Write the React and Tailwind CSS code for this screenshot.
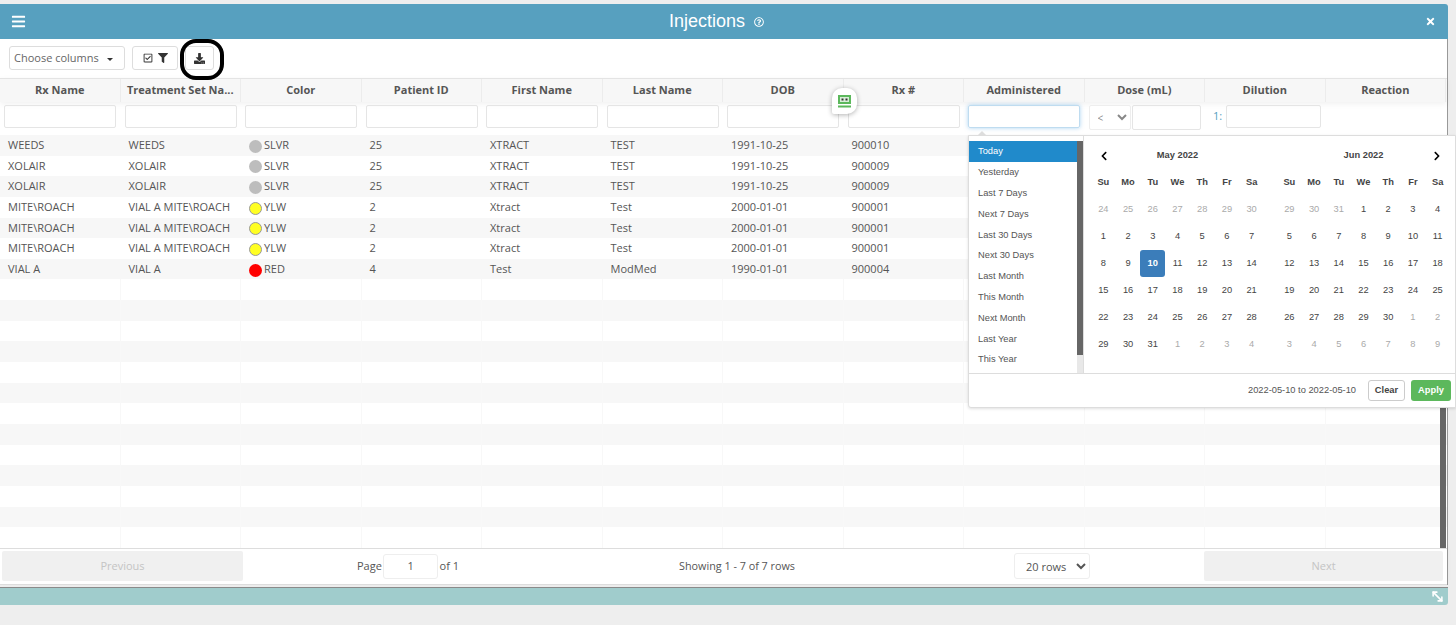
import { FaBars, FaTimes, FaFilter, FaRegCheckSquare, FaRegQuestionCircle, FaChevronLeft, FaChevronRight, FaDownload } from 'react-icons/fa'
import { MoveDiagonal2 } from 'lucide-react'

const columns = ['Rx Name', 'Treatment Set Na...', 'Color', 'Patient ID', 'First Name', 'Last Name', 'DOB', 'Rx #', 'Administered', 'Dose (mL)', 'Dilution', 'Reaction']

const rows = [
    ['WEEDS', 'WEEDS', 'SLVR', '25', 'XTRACT', 'TEST', '1991-10-25', '900010'],
    ['XOLAIR', 'XOLAIR', 'SLVR', '25', 'XTRACT', 'TEST', '1991-10-25', '900009'],
    ['XOLAIR', 'XOLAIR', 'SLVR', '25', 'XTRACT', 'TEST', '1991-10-25', '900009'],
    ['MITE\\ROACH', 'VIAL A MITE\\ROACH', 'YLW', '2', 'Xtract', 'Test', '2000-01-01', '900001'],
    ['MITE\\ROACH', 'VIAL A MITE\\ROACH', 'YLW', '2', 'Xtract', 'Test', '2000-01-01', '900001'],
    ['MITE\\ROACH', 'VIAL A MITE\\ROACH', 'YLW', '2', 'Xtract', 'Test', '2000-01-01', '900001'],
    ['VIAL A', 'VIAL A', 'RED', '4', 'Test', 'ModMed', '1990-01-01', '900004'],
]

const dotColors = { SLVR: 'bg-[#bdbdbd]', YLW: 'bg-[#ffff22] border border-[#999]', RED: 'bg-[#ff0000]' }

const ranges = ['Today', 'Yesterday', 'Last 7 Days', 'Next 7 Days', 'Last 30 Days', 'Next 30 Days', 'Last Month', 'This Month', 'Next Month', 'Last Year', 'This Year']

const dayNames = ['Su', 'Mo', 'Tu', 'We', 'Th', 'Fr', 'Sa']

const may = [
    [24, 25, 26, 27, 28, 29, 30],
    [1, 2, 3, 4, 5, 6, 7],
    [8, 9, 10, 11, 12, 13, 14],
    [15, 16, 17, 18, 19, 20, 21],
    [22, 23, 24, 25, 26, 27, 28],
    [29, 30, 31, 1, 2, 3, 4],
]

const jun = [
    [29, 30, 31, 1, 2, 3, 4],
    [5, 6, 7, 8, 9, 10, 11],
    [12, 13, 14, 15, 16, 17, 18],
    [19, 20, 21, 22, 23, 24, 25],
    [26, 27, 28, 29, 30, 1, 2],
    [3, 4, 5, 6, 7, 8, 9],
]

function Calendar({ title, weeks, isOff, selected, left, right }) {
    return (
        <div className="w-[173px]">
            <div className="h-[27px] flex items-center justify-between text-[9.3px] font-bold text-[#444]">
                <span className="w-[25px] flex justify-center text-[10px] text-black">{left && <FaChevronLeft />}</span>
                <span>{title}</span>
                <span className="w-[25px] flex justify-center text-[10px] text-black">{right && <FaChevronRight />}</span>
            </div>
            <div className="grid grid-cols-7 h-[27px] items-center text-center text-[9.3px] font-bold text-[#444]">
                {dayNames.map(d => <span key={d}>{d}</span>)}
            </div>
            {weeks.map((week, w) => (
                <div key={w} className="grid grid-cols-7 h-[27px] text-center text-[9.3px]">
                    {week.map((day, i) => (
                        <span
                            key={i}
                            className={`flex items-center justify-center rounded-[3px] ${selected && selected(w, i) ? 'bg-[#3b7dba] text-white font-bold' : isOff(w, day) ? 'text-[#aaa]' : 'text-[#444]'}`}
                        >
                            {day}
                        </span>
                    ))}
                </div>
            ))}
        </div>
    )
}

function DatePicker() {
    return (
        <div className="absolute left-[968px] top-[131px] w-[488px] z-20">
            <div className="absolute left-[9px] top-0 w-0 h-0 border-x-[5px] border-x-transparent border-b-[5px] border-b-[#ddd]"></div>
            <div className="mt-[4px] h-[273px] bg-white border border-[#ddd] rounded-bl-[3px] shadow-[0_1px_3px_rgba(0,0,0,0.12)] font-['Liberation_Sans',sans-serif]">
                <div className="flex h-[238px] border-b border-[#ddd]">
                    <div className="w-[115px] flex shrink-0 pt-[5px] border-r border-[#ddd]">
                        <div className="w-[108px]">
                            {ranges.map((r, i) => (
                                <div key={r} className={`h-[20.8px] pl-[9px] pt-[2px] flex items-center text-[9.3px] ${i === 0 ? 'bg-[#208acb] text-white' : 'text-[#555]'}`}>{r}</div>
                            ))}
                        </div>
                        <div className="w-[6px] bg-[#e8e8e8]">
                            <div className="h-[214px] bg-[#666]"></div>
                        </div>
                    </div>
                    <div className="flex pl-[7px] pt-[6px] gap-[13px]">
                        <Calendar title="May 2022" weeks={may} left isOff={(w, d) => (w === 0) || (w === 5 && d < 10)} selected={(w, i) => w === 2 && i === 2} />
                        <Calendar title="Jun 2022" weeks={jun} right isOff={(w, d) => (w === 0 && d > 20) || (w === 4 && d < 10) || w === 5} />
                    </div>
                </div>
                <div className="h-[33px] flex items-center justify-end pr-[4px] text-[9.3px] text-[#555]">
                    <span className="mr-[12px]">2022-05-10 to 2022-05-10</span>
                    <span className="h-[21px] w-[37px] mr-[6px] flex items-center justify-center border border-[#ccc] rounded-[3px] font-bold text-[#444]">Clear</span>
                    <span className="h-[21px] w-[40px] flex items-center justify-center bg-[#5cb85c] rounded-[3px] font-bold text-white">Apply</span>
                </div>
            </div>
        </div>
    )
}

export default function App() {
    const blankRows = Array.from({ length: 13 })

    return (
        <div className="relative h-[625px] w-[1456px] overflow-hidden bg-[#eeeeee] pt-[4px] font-['Open_Sans',sans-serif] text-[11px] text-[#555]">
            <div className="w-[1448px]">
                {/* Title bar */}
                <div className="h-[35px] bg-[#57a0bf] rounded-tr-[3px] flex items-center justify-between pl-[11px] pr-[12px] text-white">
                    <FaBars className="text-[15px]" />
                    <div className="flex items-center gap-[9px] mr-[18px] font-['Liberation_Sans',sans-serif] text-[18px] leading-none -mt-[2px]">
                        <span>Injections</span>
                        <FaRegQuestionCircle className="text-[10px] mt-[3px]" />
                    </div>
                    <FaTimes className="text-[11px]" />
                </div>

                <div className="bg-white border-r border-[#999]">
                    {/* Toolbar */}
                    <div className="h-[39px] flex items-center pl-[9px] pb-[1px]">
                        <div className="w-[116px] h-[24px] flex items-center pl-[4px] border border-[#ddd] rounded-[3px] text-[11px] text-[#666]">
                            Choose columns
                            <span className="ml-[8px] mt-[3px] w-0 h-0 border-x-[3px] border-x-transparent border-t-[3px] border-t-[#333]"></span>
                        </div>
                        <div className="w-[46px] h-[24px] ml-[7px] flex items-center justify-center gap-[5px] border border-[#ddd] rounded-[3px] text-[#333]">
                            <FaRegCheckSquare className="text-[10px]" />
                            <FaFilter className="text-[10px]" />
                        </div>
                        <div className="w-[29px] h-[24px] ml-[7px] flex items-center justify-center border border-[#ddd] rounded-[3px] text-[#333]">
                            <FaDownload className="text-[11px]" />
                        </div>
                    </div>

                    {/* Table */}
                    <div className="relative">
                        <div className="grid grid-cols-[repeat(12,120.5px)] h-[24px] bg-[#f7f7f7] border-t border-[#e4e4e4] shadow-[0_2px_6px_rgba(0,0,0,0.06)]">
                            {columns.map(c => (
                                <div key={c} className="flex items-center justify-center border-r border-[#ececec] font-bold text-[#555]">{c}</div>
                            ))}
                        </div>
                        <div className="grid grid-cols-[repeat(12,120.5px)] h-[33px] items-start pt-[3px]">
                            {columns.map((c, i) => (
                                <div key={c} className="pl-[4px] pr-[4.5px] flex gap-[1px]">
                                    {i === 8 && <div className="w-full h-[23px] border border-[#bfdcf0] rounded-[2px] shadow-[0_0_4px_rgba(90,170,230,0.5)]"></div>}
                                    {i === 9 && (
                                        <>
                                            <select className="w-[42px] h-[25px] border border-[#eee] rounded-[2px] text-[10px] text-[#888] bg-white pl-[4px]">
                                                <option>&lt;</option>
                                            </select>
                                            <div className="flex-1 h-[25px] border border-[#e5e5e5] rounded-[2px]"></div>
                                        </>
                                    )}
                                    {i === 10 && (
                                        <div className="flex items-center gap-[4px] w-full pl-[4px] text-[#57a0bf]">
                                            <span>1:</span>
                                            <div className="w-[96px] h-[23px] border border-[#e5e5e5] rounded-[2px]"></div>
                                        </div>
                                    )}
                                    {i < 8 && <div className="w-full h-[23px] border border-[#e5e5e5] rounded-[2px]"></div>}
                                </div>
                            ))}
                        </div>

                        {rows.map((row, r) => (
                            <div key={r} className={`grid grid-cols-[repeat(12,120.5px)] h-[20.65px] ${r % 2 === 0 ? 'bg-[#f7f7f7]' : ''}`}>
                                {row.map((cell, i) => (
                                    <div key={i} className={`flex items-center pl-[8px] whitespace-nowrap ${i === 2 ? 'gap-[2px]' : ''}`}>
                                        {i === 2 && <span className={`w-[13px] h-[13px] rounded-full mt-[2px] ${dotColors[cell]}`}></span>}
                                        {cell}
                                    </div>
                                ))}
                            </div>
                        ))}
                        {blankRows.map((_, r) => (
                            <div key={r} className={`grid grid-cols-[repeat(12,120.5px)] h-[20.65px] ${r % 2 === 0 ? 'bg-white' : 'bg-[#f7f7f7]'}`}>
                                {columns.map(c => <div key={c} className="border-r border-[#f8f8f8]"></div>)}
                            </div>
                        ))}

                        {/* Scrollbar thumb */}
                        <div className="absolute right-[1px] bottom-0 w-[6px] h-[141px] bg-[#666]"></div>
                    </div>

                    {/* Pagination */}
                    <div className="h-[37px] flex items-center pl-[2px] border-t border-[#ddd] border-b shadow-[0_-2px_5px_rgba(0,0,0,0.05)]">
                        <div className="w-[241px] h-[30px] bg-[#f0f0f0] rounded-[2px] flex items-center justify-center text-[#c4c4c4]">Previous</div>
                        <div className="w-[102px] ml-[114px] flex items-center justify-between text-[#555] whitespace-nowrap">
                            Page
                            <div className="w-[55px] h-[25px] border border-[#eee] rounded-[3px] flex items-center justify-center">1</div>
                            of 1
                        </div>
                        <div className="ml-[220px] w-[116px] text-[10.8px] whitespace-nowrap text-[#555]">Showing 1 - 7 of 7 rows</div>
                        <select className="w-[76px] h-[26px] ml-[219px] border border-[#eee] rounded-[3px] bg-white pl-[7px] text-[11px] text-[#555]">
                            <option>20 rows</option>
                        </select>
                        <div className="w-[239px] h-[30px] ml-[114px] bg-[#f0f0f0] rounded-[2px] flex items-center justify-center text-[#c4c4c4]">Next</div>
                    </div>
                </div>

                {/* Footer bar */}
                <div className="mt-[2px] h-[18px] bg-[#a0cccc] border-t border-[#8a8a8a] rounded-br-[3px] flex items-center justify-end pr-[3px] text-white">
                    <MoveDiagonal2 className="w-[15px] h-[15px]" strokeWidth={2.5} />
                </div>
            </div>

            {/* Black highlight drawn round the download button */}
            <div className="absolute left-[180px] top-[39px] w-[44px] h-[41px] border-[4px] border-black rounded-[16px] z-10"></div>

            {/* Floating widget */}
            <div className="absolute left-[832px] top-[88px] w-[25px] h-[26px] bg-white rounded-[10px] rounded-bl-[2px] shadow-[0_1px_5px_rgba(0,0,0,0.3)] flex items-center justify-center z-10">
                <svg width="13" height="13" viewBox="0 0 13 13">
                    <rect x="0" y="0" width="13" height="9" fill="#5cb85c" />
                    <rect x="2" y="2" width="9" height="5" fill="#d8eed8" />
                    <rect x="3.5" y="3.5" width="2" height="2" fill="#333" />
                    <rect x="7.5" y="3.5" width="2" height="2" fill="#333" />
                    <rect x="0" y="10.5" width="13" height="2" fill="#5cb85c" />
                </svg>
            </div>

            <DatePicker />
        </div>
    )
}
